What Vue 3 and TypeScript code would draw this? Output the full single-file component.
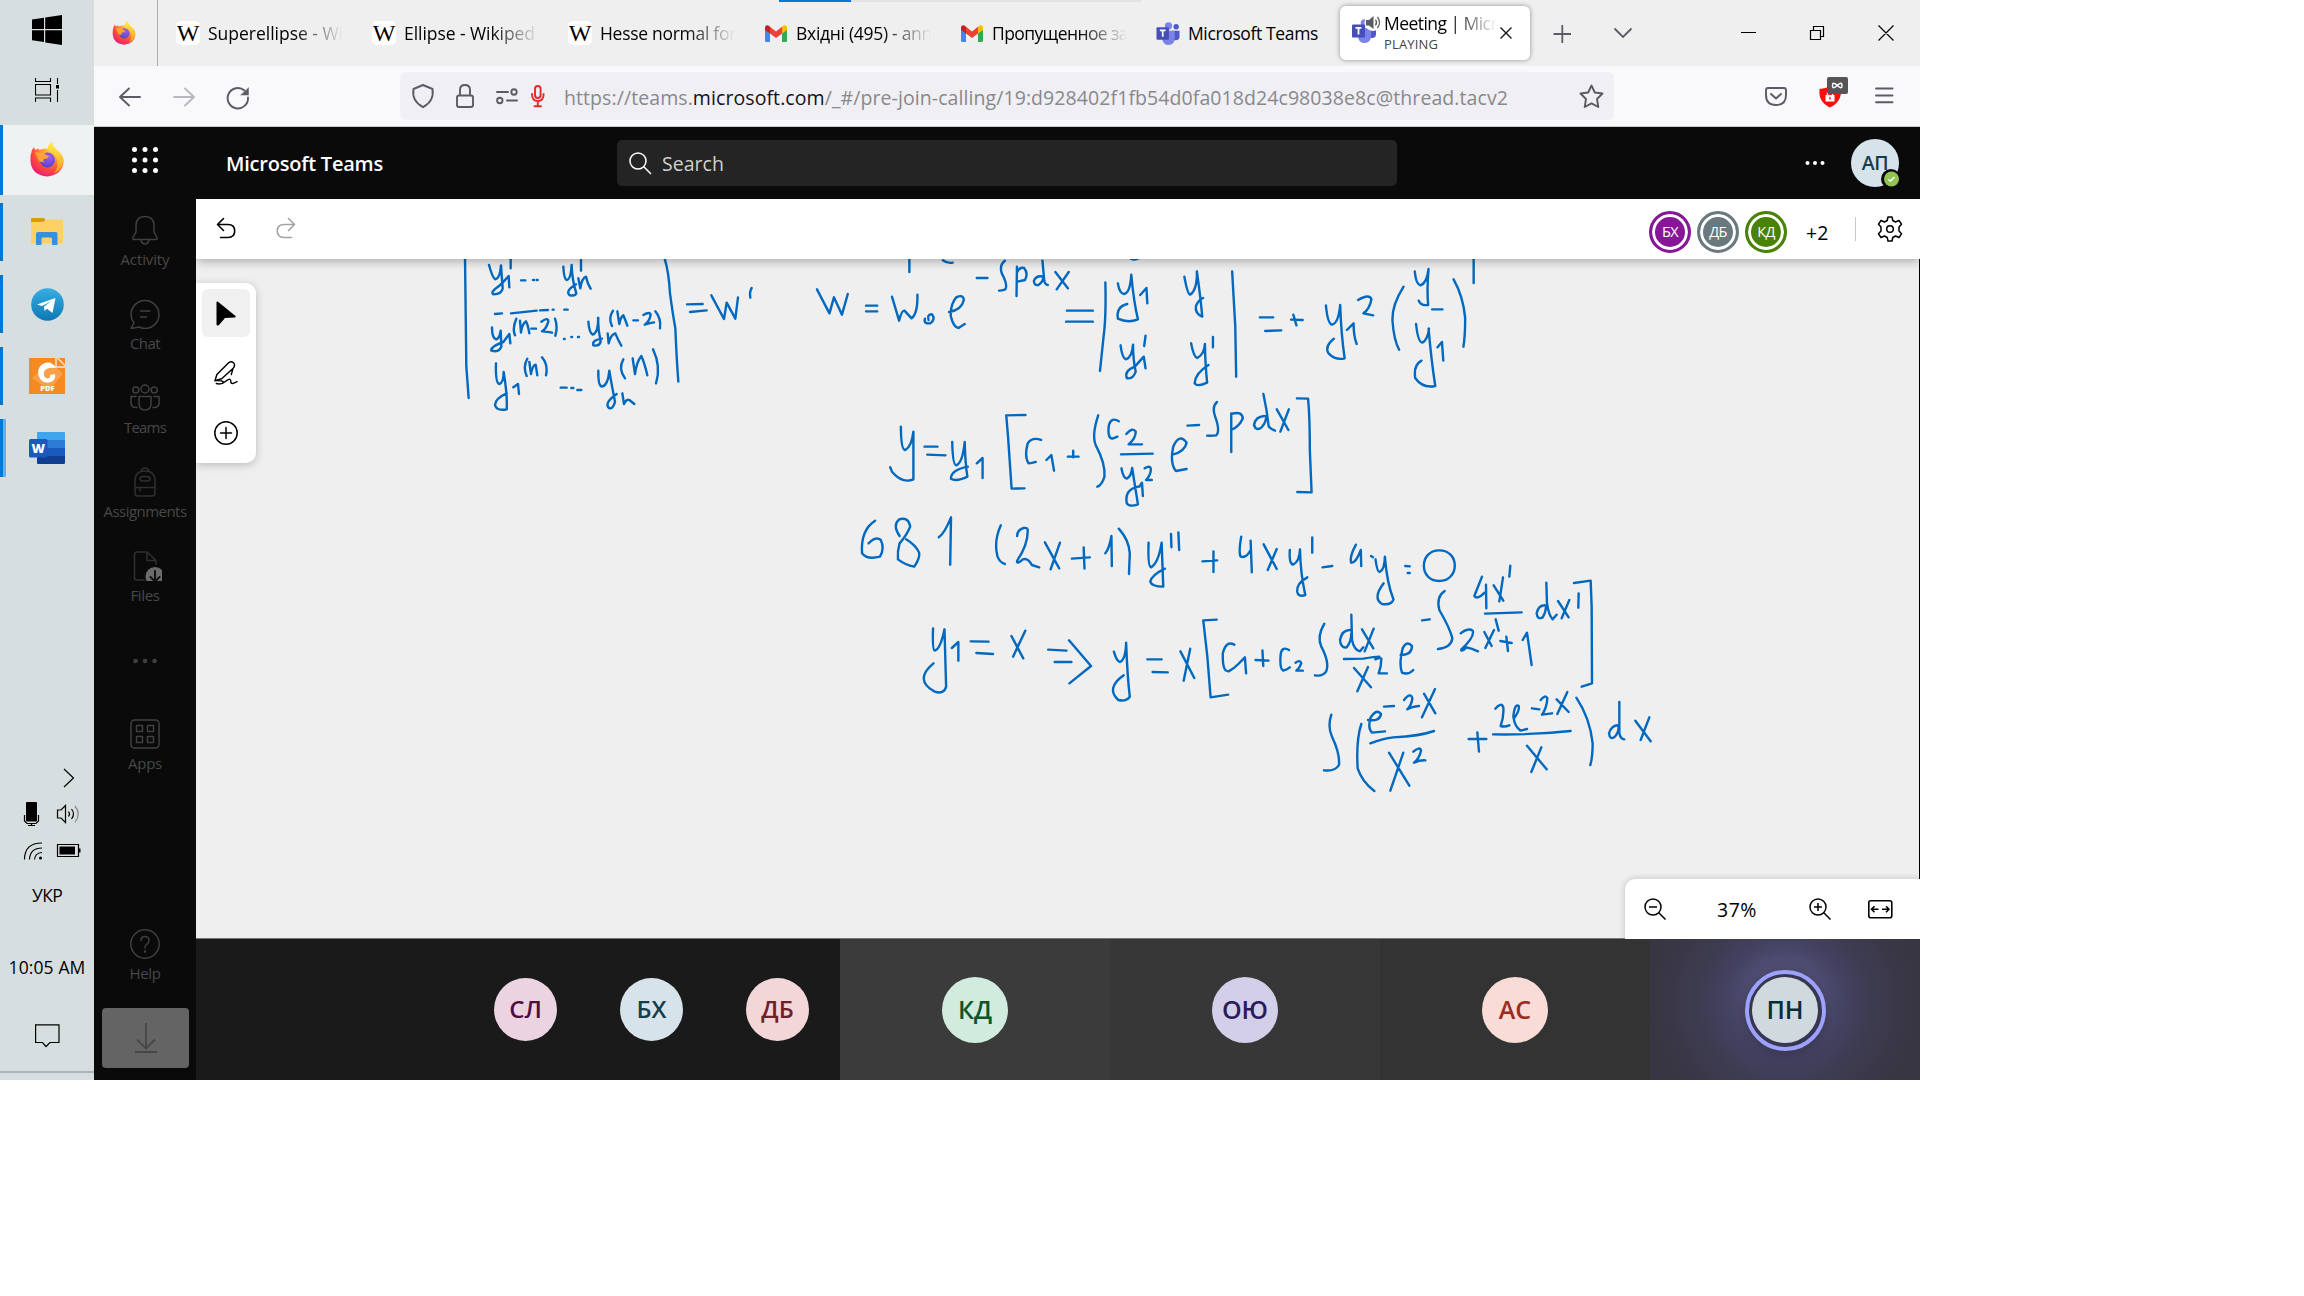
<script setup lang="ts">
import type { Directive } from 'vue'

// Spreads the letters of a label so that it takes exactly the given width.
const vFit: Directive<HTMLElement, number> = {
  mounted(el, binding) {
    const natural = el.getBoundingClientRect().width
    const count = (el.textContent ?? '').length
    if (count > 0) el.style.letterSpacing = `${(binding.value - natural) / count}px`
  },
}

interface Tab { kind: 'wiki' | 'gmail' | 'teams'; title: string; width: number; faded: boolean }
const tabs: Tab[] = [
  { kind: 'wiki', title: 'Superellipse - Wi', width: 135, faded: true },
  { kind: 'wiki', title: 'Ellipse - Wikiped', width: 131, faded: true },
  { kind: 'wiki', title: 'Hesse normal for', width: 136, faded: true },
  { kind: 'gmail', title: 'Вхідні (495) - ann', width: 136, faded: true },
  { kind: 'gmail', title: 'Пропущенное за', width: 136, faded: true },
  { kind: 'teams', title: 'Microsoft Teams', width: 130, faded: false },
]

interface NavItem { id: string; label: string; width: number }
const nav: NavItem[] = [
  { id: 'activity', label: 'Activity', width: 49 },
  { id: 'chat', label: 'Chat', width: 30 },
  { id: 'teams', label: 'Teams', width: 42 },
  { id: 'assignments', label: 'Assignments', width: 83 },
  { id: 'files', label: 'Files', width: 29 },
  { id: 'more', label: '', width: 0 },
  { id: 'apps', label: 'Apps', width: 34 },
]

const collaborators = [
  { name: 'БХ', color: '#881798' },
  { name: 'ДБ', color: '#69797e' },
  { name: 'КД', color: '#498205' },
]

const overflow = [
  { name: 'СЛ', bg: '#ebd3e2', fg: '#4f0c3e' },
  { name: 'БХ', bg: '#d7e3ea', fg: '#173c4a' },
  { name: 'ДБ', bg: '#f3d6d8', fg: '#6e2129' },
]
const tiles = [
  { name: 'КД', bg: '#d1ebde', fg: '#0b5530', tile: '#3b3b3b' },
  { name: 'ОЮ', bg: '#d4cfe9', fg: '#2a1c5c', tile: '#373737' },
  { name: 'АС', bg: '#f9dcd6', fg: '#9d2b20', tile: '#333333' },
]

// Pen strokes on the whiteboard, grouped by the area they were written in.
interface InkGroup { transform: string; strokes: string[] }
const ink: InkGroup[] = [
  {
    transform: 'translate(440 250) scale(.33333)',
    strokes: [
      'M75 20 L79 350 L86 444 M672 20 Q686 60 690 130 Q698 190 706 235 Q710 330 715 395',
      'M147 45 Q158 85 166 88 Q180 85 183 46 M183 46 L188 115 Q186 132 160 133 Q150 126 178 107 L188 98 L206 78 L208 112 M212 25 V55 M243 91 h13 M279 90 h3 M290 90 h3',
      'M370 50 Q372 88 380 90 Q392 90 395 45 M395 45 Q396 90 409 130 Q405 140 388 135 Q376 122 408 103 M415 85 L421 115 Q425 85 438 80 Q442 100 452 116 M423 30 V62',
      'M165 192 L186 190 M213 190 L290 182 M300 181 L324 180 M338 179 h3 M373 179 h10',
      'M156 232 Q156 268 170 268 Q180 262 182 242 L184 290 Q178 308 154 302 Q151 290 190 276 L208 252 L211 280 M229 206 Q216 235 225 256 M240 212 L243 248 Q246 222 258 214 Q264 225 268 250 M274 236 h14 M304 215 Q325 200 325 215 Q318 238 306 244 Q325 245 336 248 M345 206 Q354 230 346 257 M372 267 h2 M394 261 h2 M414 261 h3',
      'M445 215 Q448 250 458 254 Q474 250 475 204 M474 204 Q474 240 482 275 Q478 290 460 286 Q455 270 486 266 M503 250 L506 280 Q512 254 526 250 Q534 270 544 287 M519 182 Q504 205 516 228 M532 184 L538 222 Q542 200 550 196 Q556 210 562 227 M580 211 h14 M610 195 Q630 183 632 195 Q628 215 614 224 Q632 218 642 217 M646 184 Q664 205 660 235',
      'M168 340 Q166 400 178 402 Q190 400 191 366 M191 366 Q203 440 200 478 Q170 484 165 465 Q166 445 200 430 M220 412 L234 402 L237 432 M262 326 Q248 350 260 378 M268 336 L273 372 Q278 345 287 344 L292 376 M306 322 Q325 345 318 376 M362 413 h18 M394 414 h6 M412 420 h12',
      'M475 362 Q474 408 486 410 Q504 406 508 362 M508 362 Q514 400 525 455 Q520 476 508 475 Q490 460 530 432 M547 430 L552 462 Q560 446 568 450 L583 462 M550 328 Q534 355 555 385 M578 325 L585 372 Q590 335 604 318 Q614 340 622 376 M639 298 Q664 350 648 400',
      'M741 163 L788 162 M750 186 L800 181 M814 136 L852 207 L860 158 L886 206 L894 142 M935 114 Q928 125 931 143',
    ],
  },
  {
    transform: 'translate(800 250) scale(.44643 .33333)',
    strokes: [
      'M245 28 V66 M320 31 Q330 41 342 38 M740 25 Q750 32 758 25',
      'M38 118 L66 190 L76 142 L94 194 L107 132 M148 167 H173 M148 184 H173 M206 140 L222 212 Q228 180 234 182 L250 205 Q264 190 263 134 M280 206 Q276 222 292 220 Q304 208 296 193 Q284 192 288 210',
      'M334 186 Q362 180 367 150 Q366 132 350 142 Q336 165 338 200 Q344 232 355 234 L369 222 M396 84 H420 M459 32 Q446 45 452 70 Q466 105 460 118 Q452 122 446 122 M486 50 L485 138 M486 68 Q492 50 502 54 Q512 70 504 90 L487 95 M543 32 L547 90 Q548 104 555 105 M545 80 Q530 75 524 92 Q524 108 534 105 Q545 95 545 80 M572 66 L600 115 M602 66 L575 118',
      'M598 182 H656 M596 215 H656 M684 97 Q686 200 680 260 L672 363',
      'M712 100 Q716 132 726 132 Q740 128 742 74 M742 74 Q748 160 757 208 Q735 220 712 206 Q708 170 733 162 M762 135 L776 114 L778 160',
      'M861 80 Q868 132 874 134 Q890 120 889 64 M889 64 Q898 150 901 200 Q884 190 887 168 Q892 150 903 144 M968 64 L975 230 L977 380',
      'M718 286 Q722 325 730 328 Q744 322 746 284 Q746 330 752 365 Q745 390 732 384 Q726 362 750 350 L770 320 L774 355 M774 257 L771 288',
      'M876 280 Q882 322 890 324 Q906 312 907 282 Q908 350 912 398 Q890 412 884 400 Q885 370 915 345 M925 261 V292',
      'M1030 202 H1060 M1042 243 L1078 241 M1100 209 L1126 210 M1105 194 L1112 226',
      'M1178 166 Q1182 222 1192 224 Q1206 220 1210 165 M1210 165 Q1212 250 1220 325 Q1200 332 1184 310 Q1174 290 1196 266 M1225 240 L1240 220 Q1240 260 1247 282 M1250 150 Q1276 130 1280 148 Q1276 178 1262 190 L1284 196',
      'M1352 110 Q1326 165 1327 210 Q1330 270 1342 299 M1377 64 Q1380 104 1390 106 Q1404 100 1408 57 M1408 57 Q1404 120 1407 165 Q1390 168 1386 152 M1416 178 H1439',
      'M1380 222 Q1384 276 1394 278 Q1406 270 1409 236 M1408 236 Q1414 330 1423 408 Q1395 416 1378 384 Q1374 345 1392 332 M1428 292 L1438 276 L1441 332 M1464 88 Q1486 140 1490 205 Q1490 260 1486 290 M1509 28 V99',
      'M226 530 Q226 600 236 600 Q250 590 254 545 M254 545 V688 Q230 702 206 665 L202 652 M279 590 H308 M285 614 L326 616',
      'M341 576 Q342 645 350 646 Q364 640 369 576 M369 576 Q370 640 375 680 Q350 696 338 686 Q338 660 376 650 M396 640 L409 624 V684',
      'M505 495 L462 496 L466 560 L474 716 L503 715 M540 570 Q520 560 510 580 Q502 620 512 640 Q520 640 528 636 M552 630 L563 615 L569 662 M600 620 H624 M612 602 V622',
      'M668 496 Q652 560 664 590 Q684 640 682 680 Q676 706 666 710 M714 514 Q698 500 692 525 Q688 565 700 566 L711 560 M731 552 Q745 530 752 545 Q752 565 736 583 H766 M719 613 L790 611',
      'M720 655 Q724 685 732 686 Q742 680 744 654 L757 763 Q738 772 732 760 Q726 720 757 710 M760 710 L766 698 L768 738 M772 655 Q784 645 786 656 Q786 675 775 690 H788',
      'M834 614 Q862 605 866 578 Q850 548 836 590 Q828 640 842 663 L866 657 M868 527 L894 525 M934 456 Q922 470 930 500 Q942 545 932 556 Q922 558 912 557 M966 490 V606 M966 492 Q990 482 992 505 Q984 530 968 538 M1038 432 Q1046 480 1050 530 Q1058 540 1064 542 M1040 498 Q1020 500 1017 525 Q1022 545 1034 532 Q1045 515 1044 498',
      'M1068 478 L1094 540 M1095 478 L1076 545 M1113 445 L1138 446 Q1142 500 1142 600 L1146 727 L1114 726',
    ],
  },
  {
    transform: 'translate(840 490) scale(.40816 .33333)',
    strokes: [
      'M86 92 Q50 120 54 190 Q66 210 98 200 Q110 175 100 150 Q88 138 70 160 M146 138 Q128 105 145 88 Q168 80 172 110 Q164 135 146 160 Q140 185 142 208 Q160 225 182 230 Q196 205 194 188 Q185 165 162 148 M242 142 Q256 130 272 82 L270 224',
      'M394 106 Q376 155 386 200 Q392 218 404 222 M434 138 Q434 120 450 114 Q460 112 460 122 Q460 165 434 212 Q432 225 448 208 Q460 202 470 225 L488 232 M502 157 L537 235 M539 158 L516 238 M568 206 L612 202 M597 172 L599 236 M650 190 Q660 175 665 138 L666 228 M683 116 Q708 150 710 190 L708 252',
      'M756 158 Q754 230 762 232 Q780 220 788 158 L792 290 Q764 290 760 275 Q764 255 796 236 M811 132 L812 172 M829 127 L831 180 M888 214 L924 211 M915 184 V246 M983 140 Q976 190 982 200 Q996 205 1006 180 M1006 152 L1009 247 M1038 163 L1070 237 M1070 177 L1048 240',
      'M1102 180 Q1100 222 1110 224 Q1126 215 1127 178 Q1128 250 1140 315 Q1122 322 1120 305 Q1118 280 1145 262 M1157 142 V188 M1182 232 L1206 228 M1264 164 Q1248 200 1252 218 Q1264 220 1276 180 L1277 228 M1301 198 L1306 202 M1312 208 Q1316 246 1322 246 Q1334 240 1335 200 Q1340 280 1356 328 Q1352 346 1328 342 Q1304 325 1332 280 M1385 228 L1396 229 M1391 249 h5',
      'M1468 181 C1520 181 1518 273 1468 273 C1418 273 1418 181 1468 181',
      'M228 415 Q226 480 232 482 Q246 478 256 418 L260 590 Q255 614 232 605 Q180 570 229 520 M274 474 L290 456 V512 M320 454 L364 455 M334 489 L375 492 M420 438 L449 505 M454 422 L424 500 M510 479 L555 482 M526 516 H567 M561 451 L615 528 L562 580',
      'M671 485 Q678 515 686 516 Q700 508 701 458 Q704 560 710 620 Q700 636 682 630 Q650 595 695 556 M753 508 H788 M766 546 L803 547 M834 484 L868 564 M858 476 L842 572 M923 389 L890 391 L900 500 L908 622 L951 614',
      'M966 464 Q946 450 938 490 Q936 545 952 544 Q966 535 976 522 L992 502 L995 550 M1018 510 L1050 512 M1035 481 L1037 528 M1100 480 Q1084 468 1080 490 Q1076 535 1086 542 Q1096 538 1102 532 M1116 518 Q1128 508 1130 520 Q1126 535 1118 542 H1134',
    ],
  },
  {
    transform: 'translate(1280 540) scale(.33333)',
    strokes: [
      'M133 251 Q110 290 124 320 Q150 370 138 395 Q128 410 105 406 M214 224 L216 300 Q222 330 240 334 L250 322 M213 270 Q186 268 180 300 Q182 325 200 322 Q214 305 214 280 M246 268 L280 325 M281 266 L254 334',
      'M192 357 L250 356 Q285 350 298 350 M286 358 Q300 352 304 356 Q304 380 296 400 H321 M222 384 L273 442 M264 381 L232 454 M362 345 Q396 345 396 318 Q380 300 368 325 Q356 370 366 398 Q384 406 400 390 M426 241 L449 238',
      'M494 153 Q468 170 478 210 Q510 265 517 295 Q514 322 474 327 M606 110 L583 168 Q592 180 614 158 M618 134 L619 205 M641 136 L670 182 M669 112 L658 184 M691 77 L688 110 M615 221 L725 217',
      'M542 280 Q565 262 578 272 Q585 290 544 328 Q542 338 560 322 Q575 325 594 334 M613 276 L635 318 M642 270 L616 324 M647 238 L656 272 M661 303 L695 309 M679 290 L684 333 M728 300 L741 278 L755 375',
      'M799 128 L801 190 Q806 225 818 238 L830 224 M796 196 Q775 195 770 220 Q772 240 788 232 Q798 215 798 200 M834 183 L866 232 M868 180 L845 235 M896 160 L895 203 M882 129 L932 122 L935 200 L936 430 L905 440',
      'M154 524 Q142 560 156 590 Q180 640 177 675 Q165 695 132 691 M244 552 Q228 600 233 685 Q246 725 283 753 M264 540 Q300 545 303 522 Q290 505 272 532 Q262 565 276 578 L315 574 M312 500 L342 498 M372 480 Q392 455 397 475 Q395 495 382 508 Q395 500 417 498 M432 461 L466 520 M465 447 L426 532',
      'M271 610 Q310 595 340 592 Q420 588 462 573 M327 638 L388 737 M370 638 L331 752 M400 635 Q420 618 423 632 Q418 655 402 668 Q420 660 436 661 M566 597 H619 M592 577 L597 635',
      'M646 506 Q664 485 670 502 Q672 530 662 558 Q674 562 688 556 M702 535 Q720 510 716 498 Q704 490 700 530 Q704 560 722 572 L741 567 M756 505 L778 508 M782 480 Q796 462 802 475 Q800 505 786 524 L816 520 M830 478 L866 516 M862 456 L832 522 M639 583 Q760 585 872 573',
      'M741 617 L800 688 M784 622 L754 696 M889 473 Q930 535 938 610 Q938 650 931 675 M1018 486 L1018 580 Q1022 598 1033 598 M1016 556 Q995 555 987 580 Q990 600 1002 592 Q1016 580 1016 560 M1066 542 L1112 604 M1108 532 L1082 600',
    ],
  },
]
</script>

<template>
  <svg width="0" height="0" class="defs">
    <defs>
      <radialGradient id="fx-body" cx=".7" cy=".15" r="1">
        <stop offset="0" stop-color="#fff44f" /><stop offset=".35" stop-color="#ffa030" />
        <stop offset=".65" stop-color="#ff4a3c" /><stop offset="1" stop-color="#e0108a" />
      </radialGradient>
      <radialGradient id="fx-globe" cx=".6" cy=".3" r=".8">
        <stop offset="0" stop-color="#a15cf5" /><stop offset="1" stop-color="#4a3fc4" />
      </radialGradient>
      <linearGradient id="fx-flame" x1="0" y1="0" x2="0" y2="1">
        <stop offset="0" stop-color="#fff04a" /><stop offset="1" stop-color="#ff9a1f" />
      </linearGradient>
      <linearGradient id="tg" x1="0" y1="0" x2="0" y2="1">
        <stop offset="0" stop-color="#37aee2" /><stop offset="1" stop-color="#0d78b5" />
      </linearGradient>
      <symbol id="firefox" viewBox="0 0 34 35">
        <path d="M2 8 L4 5 L5 8 L8 6.500 L9.500 8 Q14 5.500 17.500 7 Q18 3 22 0 Q23 5 28 9 Q34 14 33.500 20 Q32 33 17 34.500 Q2 33 .5 20 Q0 13 2 8Z" fill="url(#fx-body)" />
        <path d="M17.500 7 Q18 3 22 0 Q23 5 28 9 Q34 14 33 21 Q31 29 24 31 Q30 24 26 15 Q23 9 17.500 7Z" fill="url(#fx-flame)" />
        <circle cx="17.500" cy="18" r="7.500" fill="url(#fx-globe)" />
        <path d="M5 10 L11 11 Q14 9 16 13 L19 14 Q18 17 14 17 Q12 19 15 20 Q10 21 8 17Z" fill="#ffa23a" />
      </symbol>
      <symbol id="gmail" viewBox="0 0 22 17">
        <path d="M0 3 V15.500 Q0 17 1.500 17 H5 V8Z" fill="#4285f4" />
        <path d="M22 3 V15.500 Q22 17 20.500 17 H17 V8Z" fill="#34a853" />
        <path d="M0 3 Q0 0 3 .3 L5 1.800 V8.500 L0 5Z" fill="#c5221f" />
        <path d="M22 3 Q22 0 19 .3 L17 1.800 V8.500 L22 5Z" fill="#fbbc04" />
        <path d="M5 1.800 L11 6.500 L17 1.800 V8.500 L11 13 L5 8.500Z" fill="#ea4335" />
      </symbol>
      <symbol id="teams" viewBox="0 0 24 24">
        <circle cx="20.500" cy="5" r="2.800" fill="#5059c9" /><path d="M16 9 H24 V15 Q24 19 20 19 H16Z" fill="#5059c9" />
        <circle cx="12.500" cy="4" r="3.800" fill="#7b83eb" /><path d="M6 9 H19 V17 Q19 24 12.500 24 Q7 24 6 18Z" fill="#7b83eb" />
        <rect y="5.500" width="13" height="13" rx="1" fill="#464eb8" />
        <path d="M3.500 8.800 H9.500 M6.500 9 V15.500" stroke="#fff" stroke-width="1.800" fill="none" />
      </symbol>
    </defs>
  </svg>

  <div class="desktop">
    <aside class="taskbar">
      <div class="slot start">
        <svg width="30" height="30" viewBox="0 0 30 30"><path d="M0 4.500 L12 2.700 V14 H0Z M13.200 2.500 L30 0 V14 H13.200Z M0 15.300 H12 V27 L0 25.300Z M13.200 15.300 H30 V30 L13.200 27.500Z" /></svg>
      </div>
      <div class="slot view">
        <svg width="25" height="24" viewBox="0 0 25 24" fill="none" stroke="#000" stroke-width="1.100"><path d="M.5 0 V3.500 H15.500 V0 M.5 6.500 H15.500 V17 H.5Z M.5 24 V20 H15.500 V24 M22.500 0 V6 M22.500 12 V24" /><path d="M21 7 h3 v3.500 h-3z" fill="#000" stroke="none" /></svg>
      </div>
      <div class="slot app current"><svg width="34" height="35"><use href="#firefox" /></svg></div>
      <div class="slot app">
        <svg width="32" height="28" viewBox="0 0 32 28"><path d="M0 1 Q0 0 1 0 H13 L16 4 H0Z" fill="#dc9a05" /><path d="M0 4 H12 L15 1.500 H31 Q32 1.500 32 3 V24.500 Q32 25.500 31 25.500 H1 Q0 25.500 0 24.500Z" fill="#ffd162" /><path d="M5 27 V16 Q5 14 7 14 H25 Q26.500 14 26.500 16 V27 H21 V21 Q21 19.500 19.500 19.500 H12 Q10.500 19.500 10.500 21 V27Z" fill="#3790dc" /></svg>
      </div>
      <div class="slot app">
        <svg width="33" height="33" viewBox="0 0 33 33"><circle cx="16.500" cy="16.500" r="16.300" fill="url(#tg)" /><path d="M6 16.500 L24.500 10 L21.500 25 L16 20.800 L13.500 23 L13 18.500 L20.500 13 L11 18Z" fill="#fff" /></svg>
      </div>
      <div class="slot app">
        <svg width="36" height="36" viewBox="0 0 36 36"><rect width="36" height="36" fill="#f58a20" /><path d="M21 3 L34 16 L20 32 L3 20Z" fill="#f9a04b" /><path d="M27 0 V9 H36 M28.500 0 L36 7.500" stroke="#e9e6e0" stroke-width="1.500" fill="none" /><path d="M27 10 A9.500 10 0 1 0 25 22 Q27 19 26 16 L21 17 Q22 20 19 20.500 Q14 20 15 14 Q17 9 27 10Z" fill="#fff" /><text x="18.500" y="33" font-size="7.500" text-anchor="middle" class="bold" fill="#fff">PDF</text></svg>
      </div>
      <div class="slot app word">
        <svg width="36" height="33" viewBox="0 0 36 33"><rect x="8" width="28" height="32" rx="1.500" fill="#2b7cd3" /><path d="M8 8 V1.500 Q8 0 9.500 0 H34 Q36 0 36 1.500 V8Z" fill="#41a5ee" /><path d="M8 16 H36 V24 H8Z" fill="#185abd" /><path d="M8 24 H36 V30.500 Q36 32 34 32 H9.500 Q8 32 8 30.500Z" fill="#103f91" /><rect y="7" width="18.500" height="18.500" rx="1.500" fill="#185abd" /><text x="9.200" y="20.800" font-size="13" text-anchor="middle" class="bold" fill="#fff">W</text></svg>
      </div>
      <div class="tray">
        <svg width="94" height="100" viewBox="0 765 94 100" fill="none" stroke="#000" stroke-width="1.200">
          <path d="M64 769 L73.500 778 L64 787" />
          <rect x="26" y="802" width="11" height="19.500" rx="1" fill="#000" stroke="none" /><path d="M24.500 815 V821 L27 823.500 H36 L38.500 821 V815 M31.500 823.500 V825.500 M28 825.500 H35" />
          <path d="M57.500 810 H61 L65.500 805.500 V822.500 L61 818 H57.500Z M68.500 811.500 Q70.500 814 68.500 816.500 M71.500 809 Q75.500 814 71.500 819" /><path d="M75 806 Q81.500 814 75 822.500" stroke="#888" />
          <path d="M24.500 859.500 Q24.500 843 42 843 M29.500 859.500 Q30 848 42 848 M34.500 859.500 Q35 853 42 852.500" /><circle cx="40.500" cy="858" r="1.500" fill="#000" stroke="none" />
          <path d="M57.500 844.500 H78.500 V856.500 H57.500Z" /><path d="M59.500 846.500 H75 V854.500 H59.500Z M79 848.500 h1.500 v4 h-1.500z" fill="#000" stroke="none" />
        </svg>
        <span class="lang"><span v-fit="30">УКР</span></span>
        <span class="clock"><span v-fit="77">10:05 AM</span></span>
        <svg class="note" width="25" height="25" viewBox="0 0 25 25" fill="none" stroke="#000" stroke-width="1.200"><path d="M.6 .8 H24 V18.500 H15 L11 22.500 L7.500 18.500 H.6Z" /></svg>
      </div>
    </aside>

    <main class="browser">
      <div class="tabbar">
        <div class="pinned"><svg width="24" height="24"><use href="#firefox" /></svg></div>
        <div v-for="tab in tabs" :key="tab.title" class="tab">
          <span class="favicon">
            <span v-if="tab.kind === 'wiki'" class="wiki">W</span>
            <svg v-else-if="tab.kind === 'gmail'" width="22" height="17"><use href="#gmail" /></svg>
            <svg v-else width="24" height="23"><use href="#teams" /></svg>
          </span>
          <span class="tab-title" :class="{ faded: tab.faded }"><span v-fit="tab.width">{{ tab.title }}</span></span>
        </div>
        <div class="tab-active">
          <svg width="32" height="34" viewBox="0 0 32 34"><g transform="translate(0 5)"><use href="#teams" width="24" height="24" /></g><circle cx="21" cy="8.500" r="8.500" fill="#fff" /><path d="M14 6 H17 L21.500 2 V15 L17 11.500 H14Z" fill="#5b5b66" /><path d="M23.500 5.500 Q25.500 8.500 23.500 11.500 M25.500 3 Q29.500 8.500 25.500 14" fill="none" stroke="#5b5b66" stroke-width="1.300" /></svg>
          <div class="active-text">
            <span class="meeting"><span v-fit="113">Meeting | Micr</span></span>
            <span class="playing"><span v-fit="54">PLAYING</span></span>
          </div>
          <svg class="x" width="12" height="12" viewBox="0 0 12 12"><path d="M.5 .5 L11.500 11.500 M11.500 .5 L.5 11.500" stroke="#15141a" stroke-width="1.400" /></svg>
        </div>
        <svg class="controls" width="390" height="66" viewBox="1530 0 390 66" fill="none">
          <path d="M1553.500 34 H1571 M1562.300 25 V43 M1614.500 28.500 L1623 37 L1631.500 28.500" stroke="#5b5b66" stroke-width="1.800" />
          <path d="M1741 32.500 H1756 M1810.500 30.500 H1820.500 V39.500 H1810.500Z M1813.500 30 V26.500 H1823.500 V36.500 H1821 M1878.500 25.500 L1893.500 40.500 M1893.500 25.500 L1878.500 40.500" stroke="#000" stroke-width="1.200" />
        </svg>
        <span class="progress"></span>
      </div>

      <div class="toolbar">
        <svg width="306" height="60" viewBox="94 66 306 60" fill="none" stroke="#5b5b66" stroke-width="1.900" stroke-linecap="round" stroke-linejoin="round">
          <path d="M140 97 H120 M129 88.500 L120 97 L129 105.500" />
          <path d="M174 97 H194 M185 88.500 L194 97 L185 105.500" stroke="#b8b8c0" />
          <path d="M248 97.500 A10.200 10.200 0 1 1 244.500 90.500" /><path d="M248.500 88 V95 H241Z" fill="#5b5b66" stroke-width=".5" />
        </svg>
        <div class="urlbar">
          <svg width="164" height="48" viewBox="400 72 164 48" fill="none" stroke="#5b5b66" stroke-width="1.900" stroke-linejoin="round" stroke-linecap="round">
            <path d="M423 85 L432.500 89 Q434.500 101 423 107.200 Q411.500 101 413.500 89Z" />
            <rect x="457" y="95.500" width="16" height="11.500" rx="2" /><path d="M460 95 V90 Q460 85 465 85 Q470 85 470 90 V95" />
            <path d="M497 92 H508 M507 100.500 H517" /><circle cx="514" cy="92" r="2.700" /><circle cx="499.800" cy="100.500" r="2.700" />
            <path d="M535 89 Q535 86 537.800 86 Q540.600 86 540.600 89 V95 Q540.600 98 537.800 98 Q535 98 535 95Z M532 94 Q532 101 537.800 101 Q543.600 101 543.600 94 M537.800 101 V106 M534.500 106.300 H541" stroke="#e22b26" />
          </svg>
          <span v-fit="944" class="url">https://teams.<b>microsoft.com</b>/_#/pre-join-calling/19:d928402f1fb54d0fa018d24c98038e8c@thread.tacv2</span>
          <svg class="star" width="25" height="25" viewBox="0 0 25 25" fill="none" stroke="#5b5b66" stroke-width="1.900" stroke-linejoin="round"><path d="M12.500 1.500 L15.800 8.500 L23.500 9.500 L18 15 L19.300 23 L12.500 19.300 L5.700 23 L7 15 L1.500 9.500 L9.200 8.500Z" /></svg>
        </div>
        <svg width="306" height="60" viewBox="1614 66 306 60" fill="none" stroke="#5b5b66" stroke-width="1.900" stroke-linecap="round" stroke-linejoin="round">
          <path d="M1768 88 H1784 Q1786 88 1786 90 V95 Q1786 105 1776 105 Q1766 105 1766 95 V90 Q1766 88 1768 88Z M1771 94 L1776 98.500 L1781 94" />
          <path d="M1830 86 Q1836 89 1841 89 Q1842 102 1830 107.500 Q1818 102 1819.500 89 Q1825 89 1830 86Z" fill="#fa0f0f" stroke="none" />
          <rect x="1825.500" y="95" width="9" height="6.500" fill="#fff" stroke="none" /><path d="M1827.500 95 V92.500 H1832.500 V95" stroke="#fff" stroke-width="1.300" /><path d="M1830 97.500 V99" stroke="#fa0f0f" stroke-width="1.300" />
          <rect x="1827" y="77" width="21" height="17" rx="2" fill="#555" stroke="none" />
          <path d="M1837.300 85.500 Q1832.500 81 1832.500 85.500 Q1832.500 90 1837.300 85.500 Q1842 81 1842 85.500 Q1842 90 1837.300 85.500Z" stroke="#fff" stroke-width="1.400" />
          <path d="M1876 88.500 H1892.500 M1876 95.500 H1892.500 M1876 102.300 H1892.500" />
        </svg>
      </div>

      <header class="teams-head">
        <svg class="waffle" width="102" height="72" viewBox="94 127 102 72" fill="#fff"><template v-for="r in 3" :key="r"><circle v-for="c in 3" :key="c" :cx="124 + c * 10.5" :cy="139 + r * 10.5" r="2.500" /></template></svg>
        <span class="brand"><span v-fit="157">Microsoft Teams</span></span>
        <div class="search">
          <svg width="23" height="23" viewBox="0 0 23 23" fill="none" stroke="#fff" stroke-width="1.500"><circle cx="9" cy="9" r="8" /><path d="M14.800 14.800 L22 22" /></svg>
          <span v-fit="62">Search</span>
        </div>
        <svg class="dots" width="21" height="6" viewBox="0 0 21 6" fill="#fff"><circle cx="2.500" cy="3" r="2" /><circle cx="10" cy="3" r="2" /><circle cx="17.500" cy="3" r="2" /></svg>
        <div class="me">АП
          <svg width="20" height="20" viewBox="0 0 20 20"><circle cx="10" cy="10" r="10" fill="#0a0a0a" /><circle cx="10.500" cy="10" r="7.500" fill="#92c353" /><path d="M7.500 10.500 L9.500 12 L13.500 8" stroke="#fff" stroke-width="1.500" fill="none" /></svg>
        </div>
      </header>

      <div class="teams-body">
        <nav class="rail">
          <div v-for="item in nav" :key="item.id" class="nav-item" :class="item.id">
            <svg width="34" height="30" viewBox="-2 0 34 30" fill="none" stroke="currentColor" stroke-width="1.500" stroke-linejoin="round" stroke-linecap="round">
              <path v-if="item.id === 'activity'" d="M15 1.500 C8 1.500 6 6.500 6 11 V17 L2.800 23 Q2.500 24.500 4 24.500 H26 Q27.500 24.500 27.200 23 L24 17 V11 C24 6.500 22 1.500 15 1.500Z M11 25 Q12 29 15 29 Q18 29 19 25" />
              <path v-else-if="item.id === 'chat'" d="M4 24 Q1 20 1 15.500 A14 14 0 1 1 15 29.500 Q11.500 29.500 9 28 L1 29.500 L4 24Z M10.500 12 H20 M10.500 18 H16.500" />
              <template v-else-if="item.id === 'teams'"><circle cx="15" cy="6" r="4" /><circle cx="5.800" cy="7" r="3" /><circle cx="24.200" cy="7" r="3" /><path d="M9 13.500 H21 V20 Q21 27 15 27 Q9 27 9 20Z M6 13.500 H1 V21 Q2 25 7 24.500 M24 13.500 H29 V21 Q28 25 23 24.500" /></template>
              <path v-else-if="item.id === 'assignments'" d="M8 29 H22 Q25 29 25 26 V14 Q25 4 15 4 Q5 4 5 14 V26 Q5 29 8 29Z M11 4 Q12 1 15 1 Q18 1 19 4 M13 9.500 H17 Q20 9.500 20 12 Q20 14 17 14 H13 Q10 14 10 12 Q10 9.500 13 9.500Z M5 20.500 H25 M10 20.500 V24" />
              <template v-else-if="item.id === 'files'"><path d="M14 29 H7 Q4.500 29 4.500 27 V3 Q4.500 1 7 1 H17 L26 9.500 V13 M17 1 V9.500 H26" /><circle cx="25" cy="25.500" r="9.500" fill="#6b6b6b" stroke="none" /><path d="M25 20 V30 M20.500 26 L25 30.500 L29.500 26" stroke="#111" stroke-width="2" /></template>
              <template v-else-if="item.id === 'apps'"><rect x="1" y="1" width="28" height="28" rx="3.500" /><path d="M6.500 6.500 h6 v6 h-6z M17.500 6.500 h6 v6 h-6z M6.500 17.500 h6 v6 h-6z M17.500 17.500 h6 v6 h-6z" /></template>
              <path v-else d="M5.500 15 h.1 M15 15 h.1 M24.500 15 h.1" stroke-width="4.500" />
            </svg>
            <span v-if="item.label" class="nav-label"><span v-fit="item.width">{{ item.label }}</span></span>
          </div>
          <div class="nav-item help">
            <svg width="32" height="30" viewBox="-1 0 32 30" fill="none" stroke="currentColor" stroke-width="1.500" stroke-linecap="round"><circle cx="15" cy="15" r="14.200" /><path d="M11 11.500 Q11 7.500 15 7.500 Q19 7.500 19 11.500 Q19 14 16.500 15.500 Q15 16.500 15 19" /><circle cx="15" cy="22.500" r=".6" /></svg>
            <span class="nav-label"><span v-fit="31">Help</span></span>
          </div>
          <div class="download"><svg width="22" height="30" viewBox="0 0 22 30" fill="none" stroke="#474747" stroke-width="1.800"><path d="M11 0 V25 M2 16.500 L11 25.500 L20 16.500 M0 29 H22" /></svg></div>
        </nav>

        <section class="stage">
          <div class="board-bar">
            <svg width="110" height="60" viewBox="196 199 110 60" fill="none" stroke-width="1.600" stroke-linejoin="round" stroke-linecap="round">
              <path d="M223.500 218.500 L217.500 224.500 L223.500 230.500 M218 224.500 H228 Q234.700 224.500 234.700 231 Q234.700 237.500 228 237.500 H220.500" stroke="#000" />
              <path d="M288.500 218.500 L294.500 224.500 L288.500 230.500 M294 224.500 H284 Q277.300 224.500 277.300 231 Q277.300 237.500 284 237.500 H291.500" stroke="#a3a3a3" />
            </svg>
            <div class="people">
              <span v-for="p in collaborators" :key="p.name" class="person" :style="{ borderColor: p.color, backgroundColor: p.color }">{{ p.name }}</span>
            </div>
            <span class="extra">+2</span>
            <span class="rule"></span>
            <svg class="gear" width="26" height="26" viewBox="-13 -13 26 26" fill="none" stroke="#000" stroke-width="1.500" stroke-linejoin="round">
              <path d="M-2.800 -8.500 L-2 -12 H2 L2.800 -8.500 L5.500 -7 L9 -8.500 L11.500 -4.800 L9 -2 V2 L11.500 4.800 L9 8.500 L5.500 7 L2.800 8.500 L2 12 H-2 L-2.800 8.500 L-5.500 7 L-9 8.500 L-11.500 4.800 L-9 2 V-2 L-11.500 -4.800 L-9 -8.500 L-5.500 -7Z" /><circle r="3.300" />
            </svg>
          </div>

          <div class="board">
            <svg class="ink" width="1724" height="679" viewBox="196 259 1724 679">
              <g v-for="(group, i) in ink" :key="i" :transform="group.transform">
                <path v-for="(d, j) in group.strokes" :key="j" :d="d" />
              </g>
            </svg>
            <div class="tools">
              <span class="tool on"><svg width="20" height="25" viewBox="0 0 20 25"><path d="M.5 1.500 Q.5 0 2 .8 L19.500 15 Q20.300 16.300 18.500 16.500 L9 17 L3 24 Q.5 25.500 .5 23Z" /></svg></span>
              <span class="tool"><svg width="24" height="24" viewBox="0 0 25 25" fill="none" stroke="#000" stroke-width="1.500" stroke-linecap="round" stroke-linejoin="round"><path d="M1 20.500 L3 14 L15 2 Q18 -.5 20.500 2 Q22.500 4.500 20 7.500 L8 18.500 L1 20.500 Q8 20 10 22 M17 10 L19.500 9 L18 14 M2.500 23.500 Q8 25 13 20.500 Q18 17 17.500 22 Q18 25 24 21.500" /></svg></span>
              <span class="tool"><svg width="24" height="24" viewBox="0 0 24 24" fill="none" stroke="#000" stroke-width="1.500" stroke-linecap="round"><circle cx="12" cy="12" r="11.200" /><path d="M12 6.500 V17.500 M6.500 12 H17.500" /></svg></span>
            </div>
            <div class="zoom">
              <svg width="23" height="23" viewBox="0 0 23 23" fill="none" stroke="#000" stroke-width="1.500"><circle cx="9" cy="9" r="8" /><path d="M14.800 14.800 L21.500 21.500 M5 9 H13" /></svg>
              <span class="pct"><span v-fit="40">37%</span></span>
              <svg width="23" height="23" viewBox="0 0 23 23" fill="none" stroke="#000" stroke-width="1.500"><circle cx="9" cy="9" r="8" /><path d="M14.800 14.800 L21.500 21.500 M5 9 H13 M9 5 V13" /></svg>
              <svg class="fit" width="25" height="19" viewBox="0 0 25 19" fill="none" stroke="#000" stroke-width="1.600"><rect x=".8" y=".8" width="23" height="17" rx="2" /><path d="M3.500 9.300 H10.500 M14 9.300 H21 M6.500 6.300 L3.500 9.300 L6.500 12.300 M18 6.300 L21 9.300 L18 12.300" /></svg>
            </div>
          </div>

          <div class="strip">
            <div class="group">
              <span v-for="p in overflow" :key="p.name" class="face small" :style="{ backgroundColor: p.bg, color: p.fg }">{{ p.name }}</span>
            </div>
            <div v-for="t in tiles" :key="t.name" class="tile" :style="{ backgroundColor: t.tile }">
              <span class="face" :style="{ backgroundColor: t.bg, color: t.fg }">{{ t.name }}</span>
            </div>
            <div class="tile speaking"><span class="halo"><span class="face talk">ПН</span></span></div>
          </div>
        </section>
      </div>
    </main>
  </div>
</template>

<style>
html, body { background: #fff; margin: 0; }
</style>

<style scoped>
.defs { position: absolute; }
.desktop { display: flex; width: 1920px; height: 1080px; overflow: hidden; font-family: "Open Sans", "Noto Sans", sans-serif; color: #000; }
.desktop svg { display: block; flex: none; }
.desktop span { white-space: nowrap; }
.bold { font-family: "Open Sans", sans-serif; font-weight: 800; }

.taskbar { width: 94px; flex: none; display: flex; flex-direction: column; background: #d7dee0; }
.slot { display: flex; justify-content: center; align-items: center; box-sizing: border-box; }
.start { height: 60px; }
.view { height: 60px; margin-bottom: 5px; }
.app { height: 58px; margin-bottom: 14px; border-left: 3px solid #0078d7; padding-right: 3px; }
.app.current { height: 70px; margin-bottom: 8px; padding-bottom: 2px; background: #eff2f3; }
.app.word { background: linear-gradient(90deg, #66aee7 3px, transparent 3px); margin-bottom: 0; }
.tray { margin-top: 288px; height: 308px; border-bottom: 2px solid #abb2b5; display: flex; flex-direction: column; align-items: center; font-size: 17.500px; flex: none; box-sizing: border-box; }
.tray span { display: inline-block; line-height: 24px; }
.lang { margin-top: 18px; }
.clock { margin-top: 48px; }
.note { margin-top: 45px; }

.browser { width: 1826px; display: flex; flex-direction: column; }
.tabbar { height: 66px; background: #efefef; display: flex; align-items: center; position: relative; font-size: 17.500px; flex: none; }
.pinned { width: 64px; height: 66px; box-sizing: border-box; border-right: 1px solid #adadad; padding: 21px 0 0 18px; margin-right: 18px; flex: none; }
.tab { width: 196px; display: flex; align-items: center; flex: none; }
.favicon { width: 24px; height: 24px; margin-right: 8px; display: flex; align-items: center; justify-content: center; }
.wiki { width: 24px; height: 24px; border-radius: 5px; background: #fff; font: 24px/24px "Liberation Serif", serif; text-align: center; }
.tab-title { width: 138px; overflow: hidden; }
.tab-title > span, .meeting > span, .playing > span, .brand > span, .search > span, .pct > span, .nav-label > span { display: inline-block; }
.faded { mask-image: linear-gradient(90deg, #000 86px, transparent 135px); }
.tab-active { width: 190px; height: 54px; box-sizing: border-box; background: #fff; border-radius: 6px; box-shadow: 0 0 5px rgba(0, 0, 0, .4); margin-left: -12px; padding-left: 12px; display: flex; align-items: center; flex: none; }
.tab-active > svg:first-child { margin: -4px -1px 0 0; }
.active-text { width: 113px; margin-left: 1px; display: flex; flex-direction: column; }
.meeting { line-height: 24px; height: 21px; margin-top: -3px; padding-bottom: 3px; mask-image: linear-gradient(90deg, #000 66px, transparent 113px); }
.playing { font-size: 13px; line-height: 18px; color: #444; }
.x { margin-left: 3px; }
.progress { position: absolute; top: 0; left: 685px; width: 362px; height: 2px; background: linear-gradient(90deg, #0078d7 72px, #e3e3e3 72px); }

.toolbar { height: 60px; background: #f9f9fb; border-bottom: 1px solid #c5cdcc; display: flex; align-items: center; flex: none; }
.urlbar { width: 1214px; height: 48px; border-radius: 6px; background: #f0eff4; display: flex; align-items: center; flex: none; }
.url { font-size: 19.500px; color: #88888d; position: relative; top: 1px; display: inline-block; flex: none; }
.url b { font-weight: 400; color: #15141a; }
.star { margin-left: 71px; }

.teams-head { height: 72px; background: #0a0a0a; display: flex; align-items: center; color: #fff; flex: none; }
.brand { width: 391px; margin-left: 30px; font-size: 20px; font-weight: 600; }
.search { width: 780px; height: 46px; border-radius: 5px; background: #242424; display: flex; align-items: center; gap: 10px; padding-left: 12px; box-sizing: border-box; font-size: 19.500px; color: #d2d0ce; }
.dots { margin-left: 408px; }
.me { width: 48px; height: 48px; border-radius: 50%; background: #d7e3ea; color: #173c4a; font-size: 19.500px; font-weight: 600; line-height: 48px; text-align: center; margin-left: 25px; position: relative; letter-spacing: -.5px; }
.me svg { position: absolute; right: -2px; bottom: -2px; }

.teams-body { display: flex; height: 881px; }
.rail { width: 102px; background: #0a0a0a; display: flex; flex-direction: column; flex: none; }
.nav-item { height: 84px; padding-top: 16px; box-sizing: border-box; display: flex; flex-direction: column; align-items: center; color: #404040; flex: none; }
.assignments, .files { color: #303030; }
.more { padding-top: 27px; }
.nav-label { font-size: 15px; line-height: 20px; margin-top: 4px; color: #484848; }
.help { margin-top: 126px; }
.download { width: 87px; height: 60px; margin: 11px 0 0 8px; border-radius: 4px; background: #646464; display: flex; align-items: center; justify-content: center; }

.stage { width: 1724px; display: flex; flex-direction: column; }
.board-bar { height: 60px; background: #fff; display: flex; align-items: center; position: relative; z-index: 1; box-shadow: 0 2px 10px rgba(0, 0, 0, .3); clip-path: inset(0 0 -16px 0); flex: none; }
.people { display: flex; gap: 6px; margin: 6px 0 0 1343px; }
.person { width: 42px; height: 42px; box-sizing: border-box; border: 3px solid; border-radius: 50%; box-shadow: inset 0 0 0 3px #fff; color: #fff; font-size: 14.500px; line-height: 36px; text-align: center; letter-spacing: -.7px; }
.extra { font-size: 19.500px; margin: 7px 0 0 19px; width: 49px; }
.rule { width: 1px; height: 24px; background: #c8c8c8; }
.gear { margin-left: 21px; }
.board { height: 679px; background: #efefef; position: relative; border-right: 1px solid #000; border-bottom: 1px solid #777; box-sizing: content-box; width: 1723px; flex: none; }
.ink { position: absolute; inset: 0; }
.ink path { fill: none; stroke: #0069bf; stroke-width: 2.400px; stroke-linecap: round; stroke-linejoin: round; vector-effect: non-scaling-stroke; }
.tools { position: absolute; left: 0; top: 24px; width: 60px; height: 180px; box-sizing: border-box; padding: 6px; background: #fff; border-radius: 0 10px 10px 0; box-shadow: 0 2px 8px rgba(0, 0, 0, .22); display: flex; flex-direction: column; gap: 12px; clip-path: inset(-12px -12px -12px 0); }
.tool { width: 48px; height: 48px; border-radius: 6px; display: flex; align-items: center; justify-content: center; }
.tool.on { background: #f0f0f0; }
.zoom { position: absolute; right: -1px; bottom: -1px; width: 295px; height: 60px; box-sizing: border-box; background: #fff; border-radius: 10px 0 0 0; box-shadow: 0 0 7px rgba(0, 0, 0, .2); display: flex; align-items: center; padding-left: 19px; }
.pct { width: 92px; margin-left: 50px; font-size: 19.500px; line-height: 26px; padding-top: 2px; }
.fit { margin-left: 36px; }

.strip { height: 141px; display: flex; position: relative; z-index: 1; flex: none; }
.group { width: 644px; background: #1a1a1a; display: flex; align-items: center; justify-content: flex-end; gap: 63px; padding-right: 31px; box-sizing: border-box; }
.tile { width: 270px; display: flex; align-items: center; justify-content: center; }
.face { width: 66px; height: 66px; border-radius: 50%; font-size: 25px; font-weight: 600; line-height: 65px; text-align: center; display: block; }
.face.small { width: 63px; height: 63px; line-height: 62px; font-size: 24px; }
.speaking { background: radial-gradient(circle at 50% 44%, #56537d 0, #4e4c70 42px, #434160 62px, #3d3b4f 88px, #383642 135px); }
.halo { width: 81px; height: 81px; box-sizing: border-box; border: 4px solid #9ea2ff; border-radius: 50%; padding: 3.500px; margin-top: 1px; background: #383650; box-shadow: 0 5px 14px rgba(40, 38, 55, .55); }
.talk { background: #cfd9de; color: #082f36; }
</style>
